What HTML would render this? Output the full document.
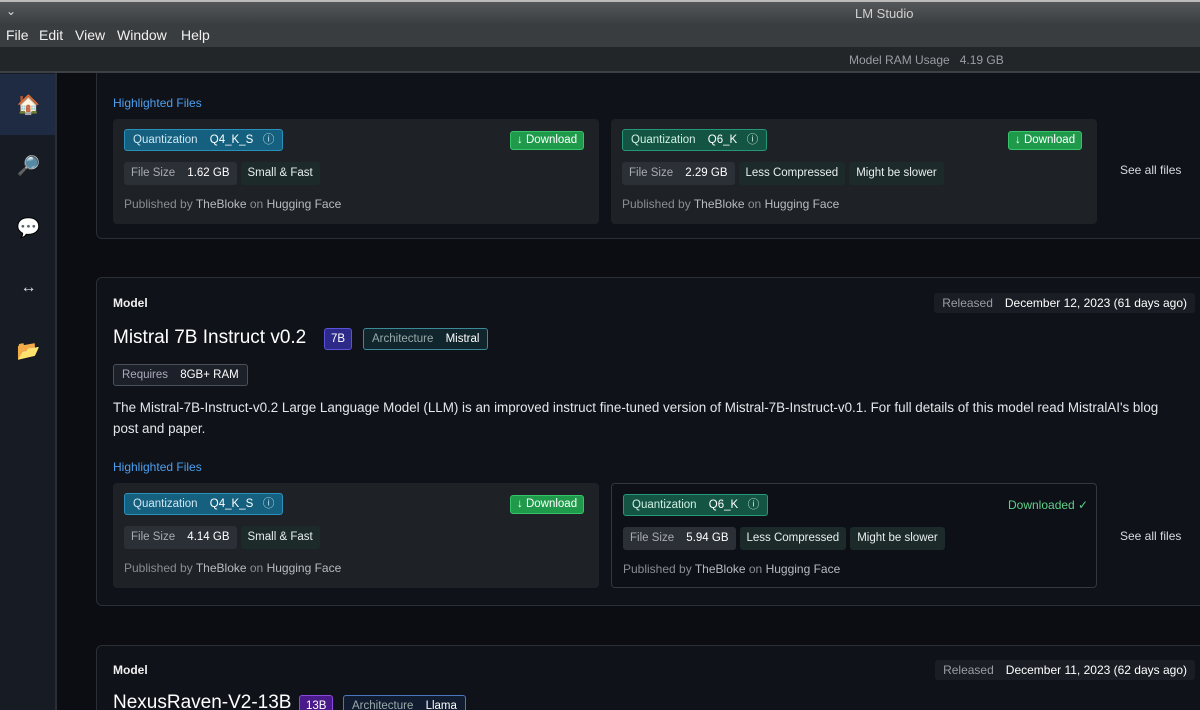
<!DOCTYPE html>
<html><head><meta charset="utf-8"><style>
*{box-sizing:border-box;margin:0;padding:0}
html,body{width:1200px;height:710px;overflow:hidden}
body{background:#0b0d12;font-family:"Liberation Sans",sans-serif;color:#e6e8ec;position:relative}
.abs{position:absolute}
#title{left:0;top:0;width:1200px;height:24px;background:linear-gradient(#55585a,#3b3e40);border-top:2px solid #bbb}
#menu{left:0;top:24px;width:1200px;height:23px;background:#3a3d3f;font-size:14px;color:#f0f0f0}
#menu span{position:absolute;top:3px}
#status{left:0;top:47px;width:1200px;height:26px;background:#232628;border-bottom:2px solid #3c3f44;font-size:12px;color:#9a9ea4}
#side{left:0;top:73px;width:57px;height:637px;background:#171b24;border-right:2px solid #2a2e36}
#clip{position:absolute;left:0;top:0;width:1200px;height:710px;clip-path:inset(73px 0 0 57px)}
.ico{position:absolute;left:0;width:57px;text-align:center;font-size:19px}
.card{position:absolute;left:96px;width:1120px;background:#0f1218;border:1px solid #2a2e35;border-radius:6px}
.fb{position:absolute;width:486px;height:105px;background:#1e2126;border-radius:4px}
.pill{position:absolute;height:22px;line-height:20px;font-size:11.5px;border-radius:3px;padding:0 8px;white-space:nowrap}
.row{position:absolute;display:flex;gap:4px}
.row .pill{position:static;height:23px;line-height:23px;padding:0 7px}
.q{background:#15607f;border:1px solid #2b8fbb;color:#cfe6f2}
.q6{background:#145443;border:1px solid #26977a;color:#cfeee3}
.gr{background:#2b2f36;color:#a8acb2}
.tg{background:#1c2a2a;color:#e8eeee}
.dl{background:#1f9a4b;border:1px solid #36c46a;color:#fff;height:19px;line-height:17px;padding:0 6px}
.pub{position:absolute;font-size:12px;color:#8a8e94}
.pub b{font-weight:normal;color:#b8bcc2}
.hf{position:absolute;left:16px;font-size:12px;color:#4d9ff0}
.see{position:absolute;font-size:12px;color:#d8dade}
.lbl{position:absolute;left:16px;font-size:12px;font-weight:bold;color:#f0f0f0}
.rel{position:absolute;right:20px;height:20px;line-height:20px;font-size:12px;background:#1a1d23;padding:0 8px;border-radius:3px;color:#fff}
.rel i{font-style:normal;color:#9a9ea4;margin-right:12px}
.w{color:#fff;margin-left:9px}
</style></head><body>
<div id="title" class="abs"><span class="abs" style="left:6px;top:2px;font-size:12px;color:#ddd">⌄</span><span class="abs" style="left:855px;top:4px;font-size:13px;color:#d0d0d0">LM Studio</span></div>
<div id="menu" class="abs"><span style="left:6px">File</span><span style="left:39px">Edit</span><span style="left:75px">View</span><span style="left:117px">Window</span><span style="left:181px">Help</span></div>
<div id="status" class="abs"><span class="abs" style="left:849px;top:6px">Model RAM Usage&nbsp;&nbsp; 4.19 GB</span></div>
<div id="side" class="abs">
<div class="abs" style="left:0;top:1px;width:55px;height:61px;background:#1f2b42"></div>
<div class="ico" style="top:20px">🏠</div>
<div class="ico" style="top:81px">🔎</div>
<div class="ico" style="top:143px">💬</div>
<div class="ico" style="top:206px;color:#ddd;font-size:16px">↔</div>
<div class="ico" style="top:266px">📂</div>
</div>

<div id="clip">
<div class="card" style="top:40px;height:199px">
<div class="hf" style="top:55px">Highlighted Files</div>
<div class="fb" style="left:16px;top:78px">
 <div class="pill q" style="left:11px;top:10px">Quantization <span class="w">Q4_K_S</span>&nbsp;&nbsp; ⓘ</div>
 <div class="pill dl" style="left:397px;top:12px">↓ Download</div>
 <div class="row" style="left:11px;top:43px"><div class="pill gr">File Size <span class="w">1.62 GB</span></div><div class="pill tg">Small &amp; Fast</div></div>
 <div class="pub" style="left:11px;top:78px">Published by <b>TheBloke</b> on <b>Hugging Face</b></div>
</div>
<div class="fb" style="left:514px;top:78px">
 <div class="pill q6" style="left:11px;top:10px">Quantization <span class="w">Q6_K</span>&nbsp;&nbsp; ⓘ</div>
 <div class="pill dl" style="left:397px;top:12px">↓ Download</div>
 <div class="row" style="left:11px;top:43px"><div class="pill gr">File Size <span class="w">2.29 GB</span></div><div class="pill tg">Less Compressed</div><div class="pill tg">Might be slower</div></div>
 <div class="pub" style="left:11px;top:78px">Published by <b>TheBloke</b> on <b>Hugging Face</b></div>
</div>
<div class="see" style="left:1023px;top:122px">See all files</div>
</div>

<div class="card" style="top:277px;height:329px">
<div class="lbl" style="top:18px">Model</div>
<div class="rel" style="top:15px;right:20px"><i>Released</i>December 12, 2023 (61 days ago)</div>
<div class="abs" style="left:16px;top:49px;font-size:19px;color:#fff">Mistral 7B Instruct v0.2</div>
<div class="pill" style="left:227px;top:50px;background:#2d2a8a;border:1px solid #5a52d8;color:#fff;padding:0 6px">7B</div>
<div class="pill" style="left:266px;top:50px;background:#10252c;border:1px solid #3b8a98;color:#9aa">Architecture <span class="w">Mistral</span></div>
<div class="pill" style="left:16px;top:86px;background:#1c2028;border:1px solid #4a505a;color:#aab">Requires <span class="w">8GB+ RAM</span></div>
<div class="abs" style="left:16px;top:119px;width:1060px;font-size:13.4px;line-height:21px;color:#e4e6ea">The Mistral-7B-Instruct-v0.2 Large Language Model (LLM) is an improved instruct fine-tuned version of Mistral-7B-Instruct-v0.1. For full details of this model read MistralAI's blog post and paper.</div>
<div class="hf" style="top:182px">Highlighted Files</div>
<div class="fb" style="left:16px;top:205px">
 <div class="pill q" style="left:11px;top:10px">Quantization <span class="w">Q4_K_S</span>&nbsp;&nbsp; ⓘ</div>
 <div class="pill dl" style="left:397px;top:12px">↓ Download</div>
 <div class="row" style="left:11px;top:43px"><div class="pill gr">File Size <span class="w">4.14 GB</span></div><div class="pill tg">Small &amp; Fast</div></div>
 <div class="pub" style="left:11px;top:78px">Published by <b>TheBloke</b> on <b>Hugging Face</b></div>
</div>
<div class="fb" style="left:514px;top:205px;background:#0d1016;border:1px solid #33373e">
 <div class="pill q6" style="left:11px;top:10px">Quantization <span class="w">Q6_K</span>&nbsp;&nbsp; ⓘ</div>
 <div class="abs" style="left:396px;top:14px;font-size:12px;color:#5fd08a">Downloaded ✓</div>
 <div class="row" style="left:11px;top:43px"><div class="pill gr">File Size <span class="w">5.94 GB</span></div><div class="pill tg">Less Compressed</div><div class="pill tg">Might be slower</div></div>
 <div class="pub" style="left:11px;top:78px">Published by <b>TheBloke</b> on <b>Hugging Face</b></div>
</div>
<div class="see" style="left:1023px;top:251px">See all files</div>
</div>

<div class="card" style="top:645px;height:100px">
<div class="lbl" style="top:17px">Model</div>
<div class="rel" style="top:14px"><i>Released</i>December 11, 2023 (62 days ago)</div>
<div class="abs" style="left:16px;top:46px;font-size:19px;color:#fff">NexusRaven-V2-13B</div>
<div class="pill" style="left:202px;top:49px;background:#4a1a8a;border:1px solid #8a4ae0;color:#fff;padding:0 6px">13B</div>
<div class="pill" style="left:246px;top:49px;background:#121c30;border:1px solid #4a78c0;color:#9aa">Architecture <span class="w">Llama</span></div>
</div>
</div>
</body></html>
